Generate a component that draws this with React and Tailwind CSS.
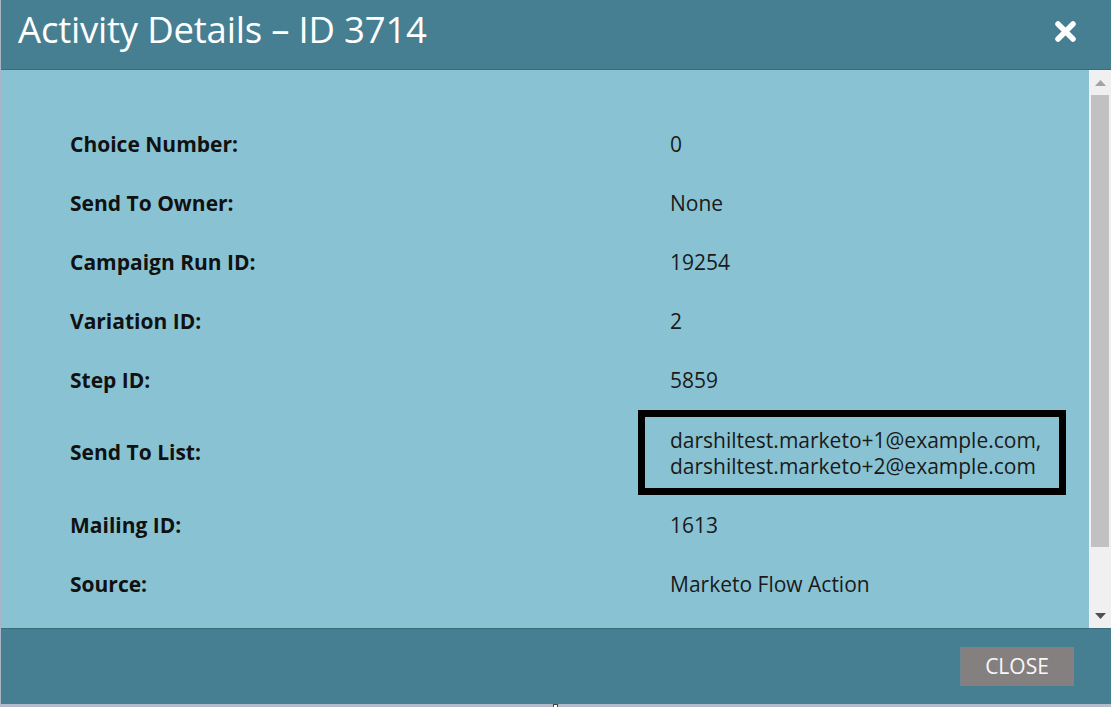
import React from "react";

const rows = [
  ["Choice Number:", "0"],
  ["Send To Owner:", "None"],
  ["Campaign Run ID:", "19254"],
  ["Variation ID:", "2"],
  ["Step ID:", "5859"],
  ["Send To List:", null],
  ["Mailing ID:", "1613"],
  ["Source:", "Marketo Flow Action"],
];

export default function App() {
  return (
    <div
      className="w-[1111px] h-[707px] flex flex-col overflow-hidden bg-[#b4bccb]"
      style={{ fontFamily: '"Open Sans", "Noto Sans", sans-serif' }}
    >
      <div className="flex flex-col border-l border-[#a9b6c6]">
        {/* Header */}
        <div className="h-[69px] bg-[#467f91] flex items-start justify-between">
          <div className="pl-[17px] pt-[9px] text-[36.5px] leading-[40px] text-white tracking-[-0.2px]">
            Activity Details – ID 3714
          </div>
          <div className="pt-[20px] pr-[34px]">
            <svg width="23" height="23" viewBox="0 0 23 23">
              <path d="M4 4 L19 19 M19 4 L4 19" stroke="#ffffff" strokeWidth="5.5" strokeLinecap="round" />
            </svg>
          </div>
        </div>
        <div className="h-px bg-[#3a6b7b]" />

        {/* Body */}
        <div className="h-[558px] flex bg-[#89c3d3]">
          <div className="flex-1 pt-[44px] pl-[69px]">
            {rows.map(([label, value]) => (
              <div
                key={label}
                className={`grid grid-cols-[600px_1fr] ${value === null ? "h-[86px]" : "h-[59px]"}`}
              >
                <div className="flex items-center text-[21px] leading-[26px] font-bold text-[#111]">
                  {label}
                </div>
                {value === null ? (
                  <div className="relative flex items-center pt-[2px] text-[21px] leading-[26px] text-[#1a1a1a]">
                    <div className="absolute top-[1px] bottom-0 left-[-32px] w-[428px] border-[7px] border-black" />
                    <div>
                      darshiltest.marketo+1@example.com,
                      <br />
                      darshiltest.marketo+2@example.com
                    </div>
                  </div>
                ) : (
                  <div className="flex items-center text-[21px] leading-[26px] text-[#1a1a1a]">
                    {value}
                  </div>
                )}
              </div>
            ))}
          </div>
          {/* Scrollbar */}
          <div className="w-[22px] bg-[#f0f0f0] flex flex-col">
            <div className="h-[25px] flex items-center justify-center">
              <svg width="11" height="6" viewBox="0 0 11 6">
                <path d="M0 6 L5.5 0 L11 6 Z" fill="#a3a3a3" />
              </svg>
            </div>
            <div className="h-[452px] mx-[2px] bg-[#c1c1c1]" />
            <div className="flex-1" />
            <div className="h-[25px] flex items-center justify-center">
              <svg width="11" height="6" viewBox="0 0 11 6">
                <path d="M0 0 L11 0 L5.5 6 Z" fill="#505050" />
              </svg>
            </div>
          </div>
        </div>
        <div className="h-px bg-[#3a6b7b]" />

        {/* Footer */}
        <div className="h-[75px] bg-[#467f91] flex items-center justify-end pr-[37px]">
          <div className="w-[114px] h-[39px] bg-[#858080] border border-[#6d8891] flex items-center justify-center text-[21px] text-[#f8f8f8]">
            CLOSE
          </div>
        </div>
      </div>
      <div className="h-[4px] flex">
        <div className="ml-[553px] w-[5px] h-[4px] bg-white border border-b-0 border-[#444]" />
      </div>
    </div>
  );
}
